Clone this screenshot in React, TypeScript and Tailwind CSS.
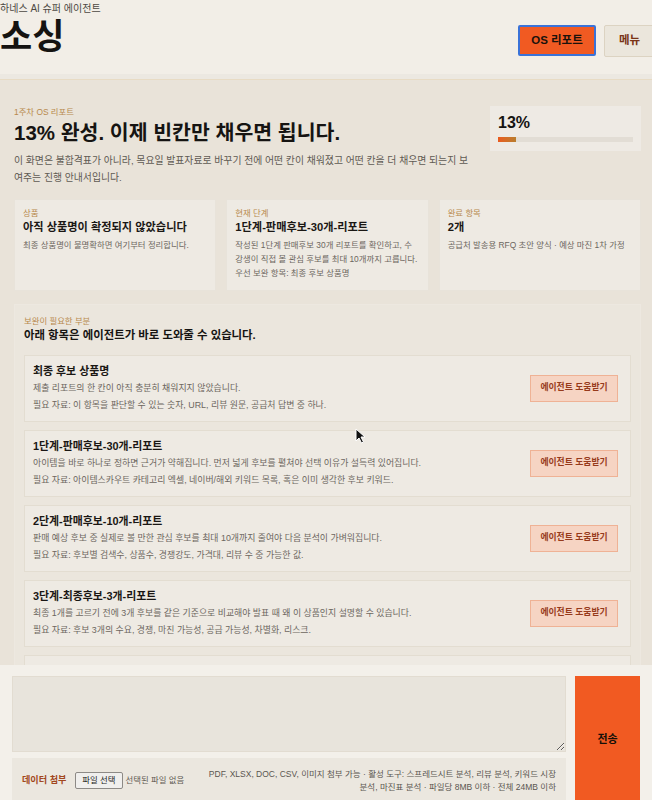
import { useState } from 'react';

interface HelpItemData {
  title: string;
  desc: string;
  need: string;
}

const summaryCards = [
  {
    label: '상품',
    title: '아직 상품명이 확정되지 않았습니다',
    desc: '최종 상품명이 불명확하면 여기부터 정리합니다.',
  },
  {
    label: '현재 단계',
    title: '1단계-판매후보-30개-리포트',
    desc: '작성된 1단계 판매후보 30개 리포트를 확인하고, 수강생이 직접 볼 관심 후보를 최대 10개까지 고릅니다. 우선 보완 항목: 최종 후보 상품명',
  },
  {
    label: '완료 항목',
    title: '2개',
    desc: '공급처 발송용 RFQ 초안 양식 · 예상 마진 1차 가정',
  },
];

const helpItems: HelpItemData[] = [
  {
    title: '최종 후보 상품명',
    desc: '제출 리포트의 한 칸이 아직 충분히 채워지지 않았습니다.',
    need: '필요 자료: 이 항목을 판단할 수 있는 숫자, URL, 리뷰 원문, 공급처 답변 중 하나.',
  },
  {
    title: '1단계-판매후보-30개-리포트',
    desc: '아이템을 바로 하나로 정하면 근거가 약해집니다. 먼저 넓게 후보를 펼쳐야 선택 이유가 설득력 있어집니다.',
    need: '필요 자료: 아이템스카우트 카테고리 엑셀, 네이버/해외 키워드 목록, 혹은 이미 생각한 후보 키워드.',
  },
  {
    title: '2단계-판매후보-10개-리포트',
    desc: '판매 예상 후보 중 실제로 볼 만한 관심 후보를 최대 10개까지 줄여야 다음 분석이 가벼워집니다.',
    need: '필요 자료: 후보별 검색수, 상품수, 경쟁강도, 가격대, 리뷰 수 중 가능한 값.',
  },
  {
    title: '3단계-최종후보-3개-리포트',
    desc: '최종 1개를 고르기 전에 3개 후보를 같은 기준으로 비교해야 발표 때 왜 이 상품인지 설명할 수 있습니다.',
    need: '필요 자료: 후보 3개의 수요, 경쟁, 마진 가능성, 공급 가능성, 차별화, 리스크.',
  },
  {
    title: '4단계-최종상품-1개-리포트',
    desc: '발표 전에 최종 상품 1개와 선택 근거를 한 장으로 정리해야 합니다.',
    need: '필요 자료: 최종 후보 비교표, 공급처 견적, 예상 판매가.',
  },
];

const progress = 13;

function HelpItem({ title, desc, need }: HelpItemData) {
  return (
    <div className="flex items-center justify-between gap-3 border border-[#e3ddd1] bg-[#eeeae3] py-[7px] pl-[8px] pr-[12px]">
      <div className="min-w-0">
        <div className="text-[10.9px] font-bold leading-[17px] text-[#1a1714]">{title}</div>
        <p className="text-[8.9px] leading-[17px] text-[#6c665e]">{desc}</p>
        <p className="text-[8.9px] leading-[17px] text-[#6c665e]">{need}</p>
      </div>
      <button className="h-[27px] w-[88px] shrink-0 border border-[#efb295] bg-[#f6d4c3] text-[8.8px] font-bold text-[#963a1b]">
        에이전트 도움받기
      </button>
    </div>
  );
}

export default function App() {
  const [message, setMessage] = useState('');

  return (
    <div className="relative min-h-screen overflow-x-hidden bg-[#f2eee7] pb-[150px] font-['Liberation_Sans','Noto_Sans_CJK_KR',sans-serif]">
      {/* Top bar */}
      <header className="flex h-[74px] items-start justify-between">
        <div>
          <div className="pt-[2px] text-[10px] leading-[13px] text-[#4d4943]">하네스 AI 슈퍼 에이전트</div>
          <h1 className="mt-[4px] text-[35px] font-bold leading-[36px] text-[#151311]">소싱</h1>
        </div>
        <div className="mr-[-3px] mt-[25px] flex gap-2">
          <button className="h-[31px] w-[78px] rounded-[2px] border-2 border-[#3a72d8] bg-[#f15a22] text-[11.5px] font-bold text-[#1a120c]">
            OS 리포트
          </button>
          <button className="h-[32px] w-[51px] rounded-[2px] border border-[#dcd3c2] bg-[#ebe6dc] text-[11.5px] font-bold text-[#7a3416]">
            메뉴
          </button>
        </div>
      </header>
      <div className="h-[6px] border-b border-[#e8dbc4] bg-[#ece8e1]" />

      <main className="bg-[#e9e3d9] pl-[14px] pr-[11px] pt-[26px]">
        {/* Progress summary */}
        <section className="flex items-start justify-between">
          <div>
            <div className="text-[8.4px] leading-[12px] text-[#b8894d]">1주차 OS 리포트</div>
            <h2 className="mt-[3px] text-[20.5px] font-bold leading-[24px] text-[#161412]">
              13% 완성. 이제 빈칸만 채우면 됩니다.
            </h2>
            <p className="mt-[6.5px] w-[458px] text-[9.85px] leading-[17px] text-[#5f5a53]">
              이 화면은 불합격표가 아니라, 목요일 발표자료로 바꾸기 전에 어떤 칸이 채워졌고 어떤 칸을 더 채우면 되는지 보여주는 진행 안내서입니다.
            </p>
          </div>
          <div className="w-[151px] bg-[#eeeae4] px-[8px] pb-[9px] pt-[8px]">
            <div className="text-[16px] font-bold leading-[18px] text-[#151311]">{progress}%</div>
            <div className="mt-[5px] h-[5px] bg-[#e2ddd5]">
              <div
                className="h-full bg-gradient-to-r from-[#ea5a1f] to-[#b87d2e]"
                style={{ width: `${progress}%` }}
              />
            </div>
          </div>
        </section>

        {/* Status cards */}
        <section className="mt-[13px] grid grid-cols-3 gap-[10px]">
          {summaryCards.map((card) => (
            <div key={card.label} className="border border-[#e8e3da] bg-[#eeeae3] px-[8px] pb-[10px] pt-[7px]">
              <div className="text-[8.4px] leading-[12px] text-[#b8894d]">{card.label}</div>
              <div className="text-[11.2px] font-bold leading-[16px] text-[#1a1714]">{card.title}</div>
              <p className="mt-[3px] text-[8.4px] leading-[14px] text-[#6c665e]">{card.desc}</p>
            </div>
          ))}
        </section>

        {/* Items the agent can help with */}
        <section className="mt-[13px] border border-[#ede8e0] bg-[#ebe6dd] px-[9px] pb-[12px] pt-[10px]">
          <div className="text-[8.4px] leading-[12px] text-[#b8894d]">보완이 필요한 부분</div>
          <h3 className="text-[11.4px] font-bold leading-[16px] text-[#161412]">
            아래 항목은 에이전트가 바로 도와줄 수 있습니다.
          </h3>
          <div className="mt-[12px] flex flex-col gap-[8px]">
            {helpItems.map((item) => (
              <HelpItem key={item.title} {...item} />
            ))}
          </div>
        </section>
      </main>

      {/* pointer */}
      <svg className="absolute left-[355px] top-[428px]" width="11" height="16" viewBox="0 0 11 16">
        <path d="M1 1 L1 13 L4 10 L6.5 15 L8.5 14 L6 9 L10 9 Z" fill="#111" stroke="#fff" strokeWidth="1" />
      </svg>

      {/* Composer */}
      <div className="fixed inset-x-0 bottom-0 h-[135px] overflow-hidden bg-[#f3f0ea] px-[12px] pt-[11px]">
        <div className="grid grid-cols-[1fr_65px] gap-x-[9px]">
          <div>
            <textarea
              value={message}
              onChange={(e) => setMessage(e.target.value)}
              className="block h-[76px] w-full resize-y border border-[#e2dcd1] bg-[#e8e4dc] p-2 text-[10px] outline-none"
            />
            <div className="mt-[6px] flex h-[45px] items-center justify-between bg-[#ebe7df] px-[10px]">
              <div className="flex items-center">
                <span className="text-[9.1px] font-bold text-[#a2471d]">데이터 첨부</span>
                <span className="ml-[9px] rounded-[2px] border border-[#8d8a86] bg-[#f0efed] px-[6px] text-[8.4px] leading-[15px] text-[#1b1b1b]">
                  파일 선택
                </span>
                <span className="ml-[3px] text-[8.4px] text-[#5f5a53]">선택된 파일 없음</span>
              </div>
              <p className="w-[350px] text-right text-[8.5px] leading-[13px] text-[#5a5650]">
                PDF, XLSX, DOC, CSV, 이미지 첨부 가능 · 활성 도구: 스프레드시트 분석, 리뷰 분석, 키워드 시장 분석, 마진표 분석 · 파일당 8MB 이하 · 전체 24MB 이하
              </p>
            </div>
          </div>
          <button className="h-[127px] w-full bg-[#f15a22] text-[11px] font-bold text-[#161008]">전송</button>
        </div>
      </div>
    </div>
  );
}
